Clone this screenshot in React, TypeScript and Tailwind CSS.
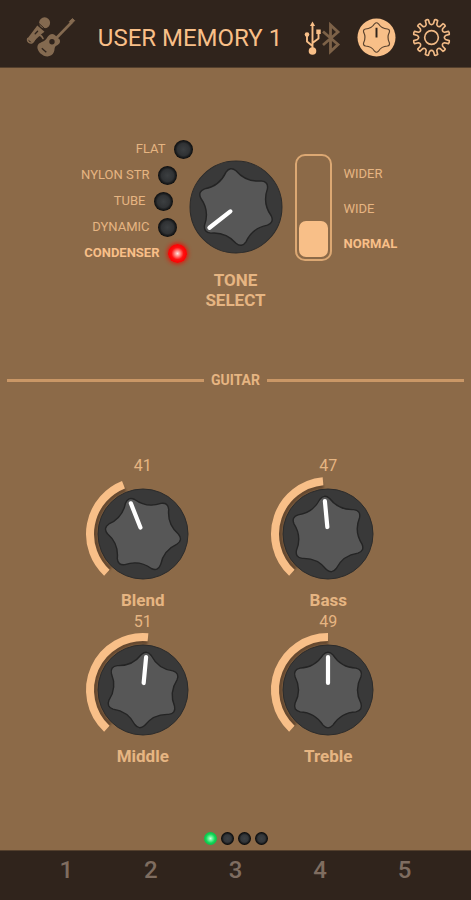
import { useState } from 'react'
import clsx from 'clsx'

const TONES = [
  { name: 'FLAT', indent: 'pr-0' },
  { name: 'NYLON STR', indent: 'pr-4' },
  { name: 'TUBE', indent: 'pr-5' },
  { name: 'DYNAMIC', indent: 'pr-4' },
  { name: 'CONDENSER', indent: 'pr-1.5' },
]

const WIDTHS = ['WIDER', 'WIDE', 'NORMAL']

function polar(r: number, deg: number) {
  const a = (deg * Math.PI) / 180
  return `${(r * Math.sin(a)).toFixed(2)} ${(-r * Math.cos(a)).toFixed(2)}`
}

// six rounded tips with hollow sides
const STAR = [0, 60, 120, 180, 240, 300]
  .map(
    (a) =>
      `${a ? 'L' : 'M'}${polar(35.5, a - 8)}Q${polar(40.5, a)} ${polar(35.5, a + 8)}Q${polar(26, a + 30)} ${polar(35.5, a + 52)}`
  )
  .join('') + 'Z'

const GEAR = Array.from({ length: 12 }, (_, i) => i * 30 + 15)
  .map(
    (a, i) =>
      `${i ? 'L' : 'M'}${polar(14.5, a - 7)}L${polar(18.5, a - 5)}Q${polar(19.2, a)} ${polar(18.5, a + 5)}L${polar(14.5, a + 7)}Q${polar(12, a + 15)} ${polar(14.5, a + 23)}`
  )
  .join('') + 'Z'

function Dial({ angle }: { angle: number }) {
  return (
    <>
      <circle r="45" fill="#393939" stroke="#2b2b2b" />
      <g transform={`rotate(${angle})`}>
        <path d={STAR} fill="#575757" stroke="#242424" strokeWidth="1.4" strokeLinejoin="round" />
        <path d="M0 -7V-33" stroke="#fff" strokeWidth="4.2" strokeLinecap="round" />
      </g>
    </>
  )
}

function Knob({ label, initial }: { label: string; initial: number }) {
  const [value, setValue] = useState(initial)
  const angle = (value - 49) * 2.7
  const large = angle > 43 ? 1 : 0

  return (
    <label className="flex flex-col items-center">
      <span className="text-base leading-5">{value}</span>
      <svg viewBox="-58 -58 116 116" className="size-[116px] overflow-visible" aria-hidden="true">
        <path
          d={`M${polar(48, -137)}A48 48 0 ${large} 1 ${polar(48, angle)}`}
          fill="none"
          stroke="#553b25"
          strokeOpacity="0.7"
          strokeWidth="5"
          className="blur-[1px]"
        />
        <path d={`M${polar(53, -137)}A53 53 0 ${large} 1 ${polar(53, angle)}`} fill="none" stroke="#f8bf88" strokeWidth="8" />
        <Dial angle={angle} />
      </svg>
      <span className="text-[17px] leading-4 font-bold">{label}</span>
      <input
        type="range"
        min={0}
        max={100}
        value={value}
        onChange={(e) => setValue(Number(e.target.value))}
        className="sr-only"
      />
    </label>
  )
}

function MicGuitarIcon() {
  return (
    <svg viewBox="0 0 50 42" className="h-[42px] w-[50px] shrink-0" fill="none" stroke="#846a50" aria-hidden="true">
      <circle cx="18.6" cy="5.800" r="5.500" fill="#846a50" stroke="none" />
      <path d="M11.300 8.500l7.200 6.200-2.600 2L6 25.800 1.300 21.800z" fill="#846a50" stroke="none" />
      <path d="M12.200 5.800l8.600 7.800" stroke="#30241c" strokeWidth="1" />
      <path d="M11.600 14.200l-2.400 2.500" stroke="#30241c" strokeWidth="1.300" strokeLinecap="round" />
      <path d="M1.800 21.500c-1 3.500 2.500 5.500 4.800 3.800 2.400-1.800 2.700-5.800 5.400-7 2.800-1 4 .8 5 3.200" strokeWidth="1.600" strokeLinecap="round" />
      <path
        d="M21.500 20c2.300-3 4.800-3.700 7.300-2l4.800 4.600c1.200 2.600-.2 4.700-2.800 5.900-3 1.300-1.700 4-2.900 6.600-1.700 4-5.900 5.300-10.100 3.600-4.900-2.200-8.300-7.900-5.300-11.600 2.300-2.500 6.900-2.200 9-7.100z"
        fill="#846a50"
        stroke="none"
      />
      <path d="M27 24.500L45.500 5.500" strokeWidth="2.600" />
      <path d="M43.300 4.600l3-3 2.400 2-3.300 3.400z" fill="#846a50" strokeWidth="1" strokeLinejoin="round" />
      <circle cx="26" cy="24.800" r="2.700" fill="#30241c" stroke="none" />
      <path d="M15.800 31.200l4.500 4" stroke="#30241c" strokeWidth="1.300" />
    </svg>
  )
}

function ConnectionIcon() {
  return (
    <svg viewBox="0 0 37 34" className="h-[34px] w-[37px]" fill="none" role="img" aria-label="USB connected, Bluetooth off">
      <path d="M8.500 30V4M8.500 25L3 20.500V14M8.500 22l6-4.500V11" stroke="#f8bf88" strokeWidth="1.900" strokeLinejoin="round" />
      <path d="M8.500 .5l2.600 4.500H5.900z" fill="#f8bf88" />
      <circle cx="8.500" cy="30" r="3.800" fill="#f8bf88" />
      <circle cx="3" cy="13.500" r="2.300" fill="#f8bf88" />
      <path d="M12.300 8.500h4.400v4.400h-4.400z" fill="#f8bf88" />
      <path d="M19 10.500L34 23.500 26.500 30.500V4l7.500 7L19 24" stroke="#7d6248" strokeWidth="2.800" strokeLinejoin="miter" />
    </svg>
  )
}

export default function App() {
  const [tone, setTone] = useState('CONDENSER')
  const [width, setWidth] = useState('NORMAL')
  const [page, setPage] = useState(0)
  const toneAngle = -128 + (4 - TONES.findIndex((t) => t.name === tone)) * 24

  return (
    <div className="flex min-h-screen flex-col bg-[#8c6a48] font-[Roboto,sans-serif] text-[#e6b582]">
      <header className="flex h-[68px] items-center gap-4 border-b border-[#54402d] bg-[#30241c] pt-2 pr-5 pl-[26px]">
        <MicGuitarIcon />
        <h1 className="flex-1 text-center text-2xl whitespace-nowrap text-[#f8bf88]">USER MEMORY 1</h1>
        <ConnectionIcon />
        <button type="button" aria-label="Knobs">
          <svg viewBox="-20 -20 40 40" className="size-[39px]" aria-hidden="true">
            <circle r="19.500" fill="#f8bf88" />
            <path d={STAR} transform="scale(0.4)" fill="none" stroke="#59422e" strokeWidth="3" strokeLinejoin="round" />
            <path d="M0 0V-10" stroke="#30241c" strokeWidth="2" />
          </svg>
        </button>
        <button type="button" aria-label="Settings">
          <svg viewBox="-20 -20 40 40" className="size-[39px]" fill="none" stroke="#f0b985" strokeWidth="1.700" strokeLinejoin="round" aria-hidden="true">
            <path d={GEAR} />
            <circle r="7" />
          </svg>
        </button>
      </header>

      <main className="flex flex-1 flex-col">
        <section className="grid grid-cols-[1fr_94px_1fr] pt-[68px]">
          <fieldset className="-mr-1" aria-label="Tone">
            {TONES.map((t) => (
              <label
                key={t.name}
                className={clsx('flex h-[26px] items-center justify-end gap-2 text-[13px]', t.indent, tone === t.name && 'font-bold text-[#f8bf88]')}
              >
                {t.name}
                <input
                  type="radio"
                  name="tone"
                  checked={tone === t.name}
                  onChange={() => setTone(t.name)}
                  className="size-[19px] appearance-none rounded-full bg-[radial-gradient(circle,#3c3f41_0%,#303234_45%,#08090a_72%)] checked:bg-[radial-gradient(circle,#ffe4e0_0%,#ff8078_22%,#ff1010_45%,#fa0000_70%)] checked:shadow-[0_0_4px_1px_#e01808]"
                />
              </label>
            ))}
          </fieldset>

          <div className="flex flex-col items-center pt-6">
            <svg viewBox="-46 -46 92 92" className="size-[94px]" aria-hidden="true">
              <Dial angle={toneAngle} />
            </svg>
            <h2 className="mt-4 text-center text-[17px] leading-5 font-bold">
              TONE
              <br />
              SELECT
            </h2>
          </div>

          <fieldset className="pt-[18px] pl-3" aria-label="Width">
            <div className="flex items-start gap-3">
              <div className="flex h-[107px] w-[37px] flex-col rounded-[10px] border-2 border-[#dca873] p-0.5">
                {WIDTHS.map((w) => (
                  <input
                    key={w}
                    id={w}
                    type="radio"
                    name="width"
                    checked={width === w}
                    onChange={() => setWidth(w)}
                    className="w-full flex-1 appearance-none rounded-[7px] checked:grow-[1.15] checked:bg-[#f8bf88]"
                  />
                ))}
              </div>
              <div className="flex flex-col pt-0.5">
                {WIDTHS.map((w) => (
                  <label key={w} htmlFor={w} className={clsx('flex h-[35px] items-center text-[13px]', width === w && 'font-bold text-[#f8bf88]')}>
                    {w}
                  </label>
                ))}
              </div>
            </div>
          </fieldset>
        </section>

        <section className="mt-[60px]">
          <div className="flex items-center gap-[7px] px-[7px]">
            <span className="h-[3px] flex-1 bg-[#ca9766]" />
            <h2 className="text-sm font-bold">GUITAR</h2>
            <span className="h-[3px] flex-1 bg-[#ca9766]" />
          </div>
          <div className="mt-[66px] grid grid-cols-2 gap-y-1 px-[50px]">
            <Knob label="Blend" initial={41} />
            <Knob label="Bass" initial={47} />
            <Knob label="Middle" initial={51} />
            <Knob label="Treble" initial={49} />
          </div>
        </section>

        <nav aria-label="Pages" className="mt-auto flex justify-center gap-1 pb-[5px]">
          {[0, 1, 2, 3].map((n) => (
            <button
              key={n}
              type="button"
              aria-label={`Page ${n + 1}`}
              onClick={() => setPage(n)}
              className={clsx(
                'size-[13px] rounded-full',
                page === n
                  ? 'bg-[radial-gradient(circle,#c9ffdc_0%,#5ff292_25%,#12d455_50%,#0cc24a_70%)]'
                  : 'bg-[radial-gradient(circle,#3c4043_0%,#34373a_40%,#0a0b0c_66%)]'
              )}
            />
          ))}
        </nav>
      </main>

      <footer className="grid h-[50px] grid-cols-5 border-t border-[#54402d] bg-[#30241c] px-6 pb-3">
        {[1, 2, 3, 4, 5].map((n) => (
          <button key={n} type="button" className="text-2xl font-medium text-[#7f6d60]">
            {n}
          </button>
        ))}
      </footer>
    </div>
  )
}
